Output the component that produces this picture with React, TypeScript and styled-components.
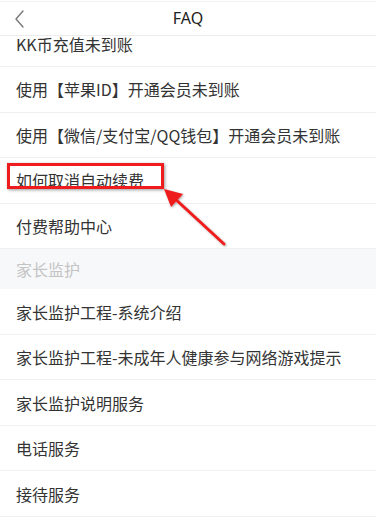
import React from "react";
import styled, { createGlobalStyle } from "styled-components";

const Global = createGlobalStyle`
  html, body { margin: 0; padding: 0; background: #fff; }
  body { font-family: "Noto Sans CJK SC", "Noto Sans", sans-serif; }
  * { box-sizing: border-box; }
`;

const Page = styled.div`
  width: 376px;
  height: 522px;
  display: flex;
  flex-direction: column;
  overflow: hidden;
  background: #fff;
`;

const Header = styled.header`
  flex: 0 0 auto;
  height: 35px;
  margin-top: 1px;
  border-top: 1px solid #f1f1f1;
  border-bottom: 1px solid #ececec;
  display: grid;
  grid-template-columns: 40px 1fr 40px;
  align-items: center;
  background: #fff;
  position: relative;
  z-index: 2;
`;

const Back = styled.div`
  display: flex;
  align-items: center;
  justify-content: flex-start;
  padding-left: 14px;
`;

const Title = styled.h1`
  margin: 0;
  text-align: center;
  font-family: "Noto Sans", "Noto Sans CJK SC", sans-serif;
  font-size: 16px;
  font-weight: 400;
  color: #222;
  line-height: 1;
  padding-bottom: 1px;
`;

const Scroll = styled.div`
  flex: 1 1 auto;
  overflow: hidden;
  position: relative;
`;

const List = styled.div`
  margin-top: -14.5px;
  display: flex;
  flex-direction: column;
`;

const Row = styled.div`
  position: relative;
  height: 45.55px;
  flex: 0 0 auto;
  display: flex;
  align-items: center;
  padding-left: 16px;
  border-bottom: 1px solid #f0f0f0;
  font-size: 16px;
  color: #333;
  white-space: nowrap;
`;

const Section = styled.div`
  height: 40px;
  flex: 0 0 auto;
  display: flex;
  align-items: center;
  padding-left: 16px;
  background: #f7f8fa;
  font-size: 16px;
  color: #c4c4c4;
`;

const Highlight = styled.div`
  position: absolute;
  left: 7px;
  top: 5px;
  width: 157px;
  height: 26px;
  border: 3px solid #ee1c1c;
  box-shadow: 1px 1px 3px rgba(0, 0, 0, 0.4);
  pointer-events: none;
`;

const Arrow = styled.svg`
  position: absolute;
  left: 150px;
  top: 20px;
  overflow: visible;
  z-index: 3;
  pointer-events: none;
`;

const items1 = [
  "KK币充值未到账",
  "使用【苹果ID】开通会员未到账",
  "使用【微信/支付宝/QQ钱包】开通会员未到账",
  "如何取消自动续费",
  "付费帮助中心",
];

const items2 = [
  "家长监护工程-系统介绍",
  "家长监护工程-未成年人健康参与网络游戏提示",
  "家长监护说明服务",
  "电话服务",
  "接待服务",
];

export default function App() {
  return (
    <>
      <Global />
      <Page>
        <Header>
          <Back>
            <svg width="12" height="18" viewBox="0 0 12 18">
              <polyline
                points="9,1 2,9 9,17"
                fill="none"
                stroke="#777"
                strokeWidth="1.4"
                strokeLinecap="round"
                strokeLinejoin="round"
              />
            </svg>
          </Back>
          <Title>FAQ</Title>
          <div />
        </Header>
        <Scroll>
          <List>
            {items1.map((t) => (
              <Row key={t}>
                {t}
                {t === "如何取消自动续费" && (
                  <>
                    <Highlight />
                    <Arrow width="80" height="70" viewBox="0 0 80 70">
                      <defs>
                        <filter id="sh" x="-20%" y="-20%" width="140%" height="140%">
                          <feDropShadow dx="1" dy="1" stdDeviation="0.8" floodColor="#000" floodOpacity="0.35" />
                        </filter>
                      </defs>
                      <g filter="url(#sh)">
                        <line x1="74" y1="66" x2="22" y2="18" stroke="#ee1c1c" strokeWidth="3" strokeLinecap="round" />
                        <polygon points="14,11 33,16 21,29" fill="#ee1c1c" />
                      </g>
                    </Arrow>
                  </>
                )}
              </Row>
            ))}
            <Section>家长监护</Section>
            {items2.map((t) => (
              <Row key={t}>{t}</Row>
            ))}
          </List>
        </Scroll>
      </Page>
    </>
  );
}
